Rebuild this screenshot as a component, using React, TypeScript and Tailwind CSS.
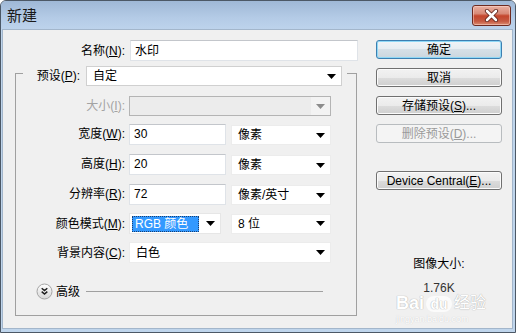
import React from "react";

const FONT = '"Liberation Sans", "Noto Sans CJK SC", sans-serif';

function Arrow({ gray }: { gray?: boolean }) {
  return (
    <svg width="9" height="5" viewBox="0 0 9 5" className="shrink-0">
      <polygon points="0,0 9,0 4.5,5" fill={gray ? "#8c8c8c" : "#000"} />
    </svg>
  );
}

function U({ children }: { children: React.ReactNode }) {
  return <span className="underline underline-offset-[1px] decoration-[1px]">{children}</span>;
}

function Label({ children, gray }: { children: React.ReactNode; gray?: boolean }) {
  return (
    <div className={`w-[110px] shrink-0 text-right pr-[1px] ${gray ? "text-[#a3a3a3]" : "text-black"}`}>
      {children}
    </div>
  );
}

function TextInput({ value, w }: { value: string; w: string }) {
  return (
    <div
      className={`${w} h-[21px] bg-white border border-[#dfe3e8] border-t-[#c3c6cb] flex items-center pl-[4px] shrink-0`}
    >
      {value}
    </div>
  );
}

function Combo({ value, w, border }: { value: string; w: string; border?: string }) {
  return (
    <div
      className={`${w} h-[20px] bg-white border ${border ?? "border-[#ececec]"} flex items-center justify-between pl-[6px] pr-[5px] shrink-0`}
    >
      <span>{value}</span>
      <Arrow />
    </div>
  );
}

function Btn({
  children,
  kind,
  mt,
}: {
  children: React.ReactNode;
  kind?: "default" | "disabled";
  mt: string;
}) {
  const base =
    "w-[126px] h-[19px] rounded-[3px] border flex items-center justify-center shrink-0";
  if (kind === "default")
    return (
      <div
        className={`${base} ${mt} border-[#3c7fb1] bg-[linear-gradient(#f0f4f7,#e6edf2_50%,#d6e0e7_50%,#cbd6de)] shadow-[inset_0_0_0_1px_#8fd8f6]`}
      >
        {children}
      </div>
    );
  if (kind === "disabled")
    return (
      <div className={`${base} ${mt} border-[#b8bcbf] bg-[#f4f4f4] text-[#9a9a9a]`}>{children}</div>
    );
  return (
    <div
      className={`${base} ${mt} border-[#707070] bg-[linear-gradient(#f2f2f2,#ebebeb_50%,#dddddd_50%,#cfcfcf)] shadow-[inset_0_0_0_1px_#fbfbfb]`}
    >
      {children}
    </div>
  );
}

export default function App() {
  return (
    <div
      className="w-[516px] h-[333px] relative overflow-hidden rounded-t-[6px] border border-[#4c5866] bg-[#bfd5ec] flex flex-col text-[12px] leading-[16px] text-black"
      style={{ fontFamily: FONT }}
    >
      {/* title bar */}
      <div className="h-[28px] shrink-0 flex items-start justify-between pl-[6px] pr-[4px] bg-[linear-gradient(#9fb8d6,#b4cbe6_60%,#bdd3ec)]">
        <span className="text-[15px] leading-[20px] mt-[5px] text-[#1a1a1a]">新建</span>
        <div className="mt-[4px] w-[39px] h-[21px] rounded-[3px] border border-[#6e2b21] bg-[linear-gradient(#eab0a2,#d88a77_40%,#c4462d_52%,#c55a42_80%,#dc8d72)] flex items-center justify-center shadow-[inset_0_0_0_1px_rgba(255,220,210,0.5)]">
          <svg width="15" height="13" viewBox="0 0 15 13">
            <path d="M3 2 L12 11 M12 2 L3 11" stroke="#5a1e15" strokeWidth="4.2" strokeLinecap="round" />
            <path d="M3 2 L12 11 M12 2 L3 11" stroke="#ffffff" strokeWidth="2.6" strokeLinecap="round" />
          </svg>
        </div>
      </div>

      {/* content */}
      <div className="ml-[1px] mr-[2px] mb-[3px] flex-1 border border-[#a3b6cb] bg-[#f0f0f0] flex">
        {/* left column */}
        <div className="w-[373px] shrink-0 flex flex-col">
          {/* name row */}
          <div className="mt-[10px] flex items-center">
            <div className="w-[123px] text-right pr-[1px]">
              名称(<U>N</U>):
            </div>
            <div className="ml-[4px]">
              <TextInput value="水印" w="w-[228px]" />
            </div>
          </div>

          {/* group box */}
          <div className="mt-[12px] ml-[12px] w-[342px] h-[243px] border border-[#a0a0a0] flex flex-col">
            {/* legend row */}
            <div className="-mt-[8px] ml-[7px] w-[324px] h-[20px] bg-[#f0f0f0] flex items-center">
              <div className="w-[58px] text-right pr-[1px]">
                预设(<U>P</U>):
              </div>
              <div className="ml-[5px]">
                <Combo value="自定" w="w-[256px]" border="border-[#d0d0d0]" />
              </div>
            </div>

            {/* size (disabled) */}
            <div className="mt-[10px] flex items-center">
              <Label gray>
                大小(<U>I</U>):
              </Label>
              <div className="ml-[3px] w-[202px] h-[20px] border border-[#b4b4b4] bg-[#ececec] flex items-center justify-end">
                <div className="w-[19px] h-full bg-[#f3f3f3] flex items-center justify-center">
                  <Arrow gray />
                </div>
              </div>
            </div>

            {/* width */}
            <div className="mt-[7px] flex items-center">
              <Label>
                宽度(<U>W</U>):
              </Label>
              <div className="ml-[3px]">
                <TextInput value="30" w="w-[97px]" />
              </div>
              <div className="ml-[5px] mt-[2px]">
                <Combo value="像素" w="w-[100px]" />
              </div>
            </div>

            {/* height */}
            <div className="mt-[8px] flex items-center">
              <Label>
                高度(<U>H</U>):
              </Label>
              <div className="ml-[3px]">
                <TextInput value="20" w="w-[97px]" />
              </div>
              <div className="ml-[5px] mt-[2px]">
                <Combo value="像素" w="w-[100px]" />
              </div>
            </div>

            {/* resolution */}
            <div className="mt-[8px] flex items-center">
              <Label>
                分辨率(<U>R</U>):
              </Label>
              <div className="ml-[3px]">
                <TextInput value="72" w="w-[97px]" />
              </div>
              <div className="ml-[5px] mt-[2px]">
                <Combo value="像素/英寸" w="w-[100px]" />
              </div>
            </div>

            {/* color mode */}
            <div className="mt-[8px] flex items-center">
              <Label>
                颜色模式(<U>M</U>):
              </Label>
              <div className="ml-[3px] w-[92px] h-[21px] bg-white border border-[#e6e6e6] flex items-center justify-between pl-[2px] pr-[5px]">
                <div className="w-[67px] h-[16px] bg-[#3399ff] outline-1 outline-dotted outline-[#1b3f70] -outline-offset-1 text-white flex items-center pl-[3px]">
                  RGB 颜色
                </div>
                <Arrow />
              </div>
              <div className="ml-[10px]">
                <Combo value="8 位" w="w-[100px]" />
              </div>
            </div>

            {/* background */}
            <div className="mt-[8px] flex items-center">
              <Label>
                背景内容(<U>C</U>):
              </Label>
              <div className="ml-[3px]">
                <Combo value="白色" w="w-[202px] h-[21px]" />
              </div>
            </div>

            {/* advanced */}
            <div className="mt-[20px] ml-[20px] flex items-center">
              <svg width="17" height="17" viewBox="0 0 17 17" className="shrink-0">
                <defs>
                  <linearGradient id="adv" x1="0" y1="0" x2="0" y2="1">
                    <stop offset="0" stopColor="#ffffff" />
                    <stop offset="1" stopColor="#d6d6d6" />
                  </linearGradient>
                </defs>
                <circle cx="8.5" cy="8.5" r="7.5" fill="url(#adv)" stroke="#a5a5a5" />
                <path
                  d="M5.7 5.2 L8.5 7.6 L11.3 5.2 M5.7 8.6 L8.5 11 L11.3 8.6"
                  stroke="#1e1e1e"
                  strokeWidth="1.5"
                  fill="none"
                />
              </svg>
              <span className="ml-[3px]">高级</span>
              <div className="ml-[6px] w-[237px] h-px bg-[#a0a0a0]" />
            </div>
          </div>
        </div>

        {/* right column */}
        <div className="flex flex-col">
          <Btn kind="default" mt="mt-[10px]">确定</Btn>
          <Btn mt="mt-[9px]">取消</Btn>
          <Btn mt="mt-[9px]">
            存储预设(<U>S</U>)...
          </Btn>
          <Btn kind="disabled" mt="mt-[9px]">
            删除预设(<U>D</U>)...
          </Btn>
          <Btn mt="mt-[28px]">
            Device Central(<U>E</U>)...
          </Btn>
          <div className="mt-[66px] w-[126px] text-center">图像大小:</div>
          <div className="mt-[8px] w-[126px] text-center text-[#333]">1.76K</div>
        </div>
      </div>

      {/* watermark overlay */}
      <div className="absolute left-[395px] top-[293px] flex flex-col pointer-events-none">
        <div className="flex items-end text-white text-[18px] leading-[18px] font-bold [text-shadow:0_0_1px_#b5b5b5,0_0_1px_#b5b5b5]">
          <span>Bai</span>
          <span className="ml-[2px] w-[26px] h-[16px] rounded-[8px] bg-white/70 flex items-center justify-center text-[14px] leading-[14px]">
            du
          </span>
          <span className="ml-[2px] font-normal text-[16px]">经验</span>
        </div>
        <div className="mt-[2px] text-[9px] leading-[10px] text-white [text-shadow:0_0_1px_#c0c0c0]">
          jingyan.baidu.com
        </div>
      </div>
    </div>
  );
}
